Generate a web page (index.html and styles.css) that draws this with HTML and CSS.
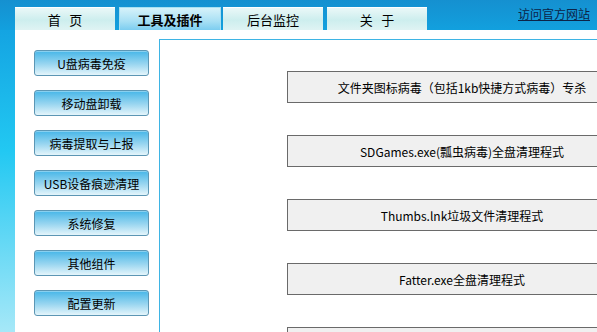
FILE: index.html
```html
<!DOCTYPE html>
<html lang="zh-CN">
<head>
<meta charset="utf-8">
<title>工具及插件</title>
<link rel="stylesheet" href="styles.css">
</head>
<body>
<div class="page">
  <header class="top">
    <nav class="tabs">
      <a class="tab">首&nbsp;&nbsp;&nbsp;页</a>
      <a class="tab active">工具及插件</a>
      <a class="tab">后台监控</a>
      <a class="tab">关&nbsp;&nbsp;&nbsp;于</a>
    </nav>
    <a class="site-link" href="#">访问官方网站</a>
  </header>
  <div class="body">
    <div class="strip"></div>
    <main class="main">
      <aside class="side">
        <button class="side-btn">U盘病毒免疫</button>
        <button class="side-btn">移动盘卸载</button>
        <button class="side-btn">病毒提取与上报</button>
        <button class="side-btn">USB设备痕迹清理</button>
        <button class="side-btn">系统修复</button>
        <button class="side-btn">其他组件</button>
        <button class="side-btn">配置更新</button>
      </aside>
      <section class="panel">
        <button class="tool-btn">文件夹图标病毒（包括1kb快捷方式病毒）专杀</button>
        <button class="tool-btn">SDGames.exe(瓢虫病毒)全盘清理程式</button>
        <button class="tool-btn">Thumbs.lnk垃圾文件清理程式</button>
        <button class="tool-btn">Fatter.exe全盘清理程式</button>
        <button class="tool-btn">&nbsp;</button>
      </section>
    </main>
  </div>
</div>
</body>
</html>
```
FILE: styles.css
```css
* { box-sizing: border-box; }
html, body { margin: 0; padding: 0; }
body {
  width: 597px;
  height: 332px;
  overflow: hidden;
  font-family: "Noto Sans CJK SC", "DejaVu Sans", sans-serif;
  font-size: 12px;
  color: #000;
  background: #1592d2;
}
.page {
  display: flex;
  flex-direction: column;
  height: 332px;
}
.top {
  height: 30px;
  flex: none;
  display: flex;
  align-items: flex-start;
  justify-content: space-between;
  background: linear-gradient(#1590d0, #12a0de);
  padding-top: 7px;
  padding-left: 15px;
  padding-right: 7px;
}
.tabs {
  display: flex;
  height: 23px;
}
.tab {
  display: flex;
  align-items: center;
  justify-content: center;
  width: 100px;
  height: 23px;
  font-size: 13px;
  line-height: 1;
  color: #000;
  border-top: 1px solid #ffffff;
  background: linear-gradient(#eaf8f8, #cdeeee 55%, #dff3f3);
  margin-right: 4px;
}
.tab.active {
  width: 102px;
  margin-right: 2px;
  font-weight: bold;
  border: 1px solid #a8e0f2;
  border-bottom: none;
  background: linear-gradient(#d6f2fa, #a8e0f4 60%, #7ccdf0);
}
.site-link {
  font-size: 12px;
  line-height: 13px;
  color: #0c2448;
  text-decoration: underline;
}
.body {
  flex: 1;
  display: flex;
  min-height: 0;
}
.strip {
  width: 15px;
  flex: none;
  background: linear-gradient(#14a4e2, #22c8f2 40%, #a6e8f8);
}
.main {
  flex: 1;
  display: flex;
  background: #fff;
  min-width: 0;
}
.side {
  width: 144px;
  flex: none;
  display: flex;
  flex-direction: column;
  gap: 14px;
  padding-top: 20px;
  padding-left: 19px;
}
.side-btn {
  width: 115px;
  height: 26px;
  padding: 0;
  font-family: inherit;
  font-size: 12px;
  color: #000;
  border: 1px solid #5c96b4;
  border-radius: 3px;
  background: linear-gradient(#46b6e8, #9ad6f0 55%, #e4f5fb);
  box-shadow: inset 0 1px 0 rgba(255,255,255,0.35);
}
.panel {
  flex: 1;
  margin-top: 9px;
  border-top: 1px solid #3eb4e4;
  border-left: 1px solid #3eb4e4;
  display: flex;
  flex-direction: column;
  gap: 32px;
  padding-top: 31px;
  padding-left: 127px;
  overflow: hidden;
  min-width: 0;
}
.tool-btn {
  flex: none;
  width: 350px;
  height: 32px;
  padding: 0;
  font-family: inherit;
  font-size: 12px;
  color: #000;
  background: #f0f0f0;
  border: 1px solid #6a6a6a;
  border-radius: 0;
}
```
